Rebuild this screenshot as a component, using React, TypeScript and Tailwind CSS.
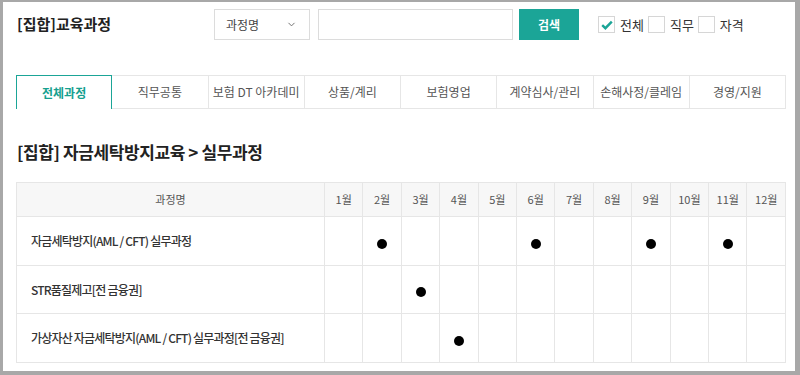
import { ChevronDown } from 'lucide-react';

const tabs = ['전체과정', '직무공통', '보험 DT 아카데미', '상품/계리', '보험영업', '계약심사/관리', '손해사정/클레임', '경영/지원'];
const months = ['1월', '2월', '3월', '4월', '5월', '6월', '7월', '8월', '9월', '10월', '11월', '12월'];

const courses = [
  { name: '자금세탁방지(AML / CFT) 실무과정', dots: [2, 6, 9, 11], h: 'h-[49px]' },
  { name: 'STR품질제고[전 금융권]', dots: [3], h: 'h-[48px]' },
  { name: '가상자산 자금세탁방지(AML / CFT) 실무과정[전 금융권]', dots: [4], h: 'h-[49px]' },
];

function Checkbox({ checked, label }: { checked?: boolean; label: string }) {
  return (
    <div className="flex items-center">
      <div className="w-[17px] h-[17px] border border-[#d6d6d6] bg-white flex items-center justify-center">
        {checked && (
          <svg width="12" height="10" viewBox="0 0 12 10">
            <path d="M1.2 5.2 L4.4 8.2 L10.8 1.6" fill="none" stroke="#1ba597" strokeWidth="2.4" />
          </svg>
        )}
      </div>
      <span className="ml-[5px] mr-[4px] text-[13px] text-[#333]">{label}</span>
    </div>
  );
}

export default function App() {
  return (
    <div
      className="w-[800px] h-[375px] bg-[#a8a8a8] pt-[2px] pl-[3px] pr-[5px] pb-[4px]"
      style={{ fontFamily: '"Noto Sans CJK KR", "Noto Sans", sans-serif' }}
    >
      <div className="w-full h-full bg-white pl-[13px] pr-[9px] overflow-hidden">
        {/* top search bar */}
        <div className="flex items-center pt-[7px] h-[38px]">
          <h1 className="w-[198px] pl-[1px] text-[15px] font-bold text-[#222]">[집합]교육과정</h1>
          <div className="w-[96px] h-[31px] border border-[#dcdcdc] flex items-center justify-between pl-[11px] pr-[12px]">
            <span className="text-[12px] text-[#444]">과정명</span>
            <ChevronDown size={11} strokeWidth={2} className="text-[#666]" />
          </div>
          <div className="ml-[8px] w-[195px] h-[31px] border border-[#dcdcdc]" />
          <button className="ml-[6px] w-[60px] h-[31px] bg-[#1ba597] text-white text-[12px] font-bold">검색</button>
          <div className="ml-[19px] flex items-center">
            <Checkbox checked label="전체" />
            <Checkbox label="직무" />
            <Checkbox label="자격" />
          </div>
        </div>

        {/* tabs */}
        <div className="mt-[35px] grid grid-cols-8 h-[34px]">
          {tabs.map((t, i) =>
            i === 0 ? (
              <div key={t} className="flex items-center justify-center border border-b-0 border-[#1ba597] text-[12px] font-bold text-[#15a08f]">
                {t}
              </div>
            ) : (
              <div key={t} className="flex items-center justify-center border-t border-b border-r border-[#e6e6e6] text-[12px] text-[#555]">
                {t}
              </div>
            )
          )}
        </div>

        <h2 className="mt-[32px] pl-[1px] text-[17px] font-bold text-[#222] leading-[22px] tracking-[-0.4px]">[집합] 자금세탁방지교육 &gt; 실무과정</h2>

        {/* schedule table */}
        <table className="mt-[19px] w-full border-collapse table-fixed">
          <colgroup>
            <col className="w-[308px]" />
            {months.map((m) => (
              <col key={m} />
            ))}
          </colgroup>
          <thead>
            <tr className="h-[34px] bg-[#f7f7f7]">
              <th className="border border-[#e6e6e6] text-[11px] font-normal text-[#555]">과정명</th>
              {months.map((m) => (
                <th key={m} className="border border-[#e6e6e6] text-[11px] font-normal text-[#555]">{m}</th>
              ))}
            </tr>
          </thead>
          <tbody>
            {courses.map((c) => (
              <tr key={c.name} className={c.h}>
                <td className="border border-[#e6e6e6] pl-[14px] text-[12px] font-medium text-[#333] tracking-[-0.8px]">{c.name}</td>
                {months.map((m, i) => (
                  <td key={m} className="border border-[#e6e6e6] text-center">
                    {c.dots.includes(i + 1) && <span className="inline-block w-[10px] h-[10px] rounded-full bg-black align-middle" />}
                  </td>
                ))}
              </tr>
            ))}
          </tbody>
        </table>
      </div>
    </div>
  );
}
